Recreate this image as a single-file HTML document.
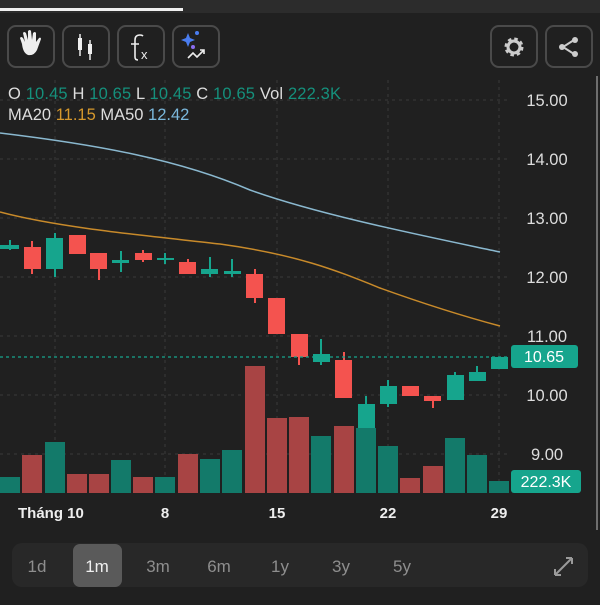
<!DOCTYPE html>
<html><head><meta charset="utf-8"><style>
body{margin:0;width:600px;height:600px;background:#202020;overflow:hidden;font-family:"Liberation Sans",sans-serif}
</style></head><body>
<svg width="600" height="600" xmlns="http://www.w3.org/2000/svg" font-family="Liberation Sans, sans-serif">
<rect width="600" height="600" fill="#202020"/>
<rect width="600" height="13" fill="#2c2c2c"/>
<rect x="0" y="8" width="183" height="3" fill="#f0f0f0"/>
<g fill="none" stroke="#4a4a4a" stroke-width="2">
<rect x="8" y="26" width="46" height="41" rx="8"/>
<rect x="63" y="26" width="46" height="41" rx="8"/>
<rect x="118" y="26" width="46" height="41" rx="8"/>
<rect x="173" y="26" width="46" height="41" rx="8"/>
<rect x="491" y="26" width="46" height="41" rx="8"/>
<rect x="546" y="26" width="46" height="41" rx="8"/>
</g>
<path d="M22 44 L20 38 Q21 36 23 38 L25 42 L23 33 Q24 31 26 33 L28 40 L28 31 Q30 29 31 31 L32 40 L33 33 Q35 31 36 33 L36 42 L39 38 Q41 37 41 39 L37 50 Q34 56 28 55 Q23 53 22 44Z" fill="#eee"/>
<g stroke="#eee" stroke-width="1.5"><line x1="80" y1="34" x2="80" y2="56"/><line x1="90" y1="40" x2="90" y2="60"/></g>
<rect x="78" y="38" width="4" height="12" fill="#eee"/><rect x="88" y="44" width="4" height="10" fill="#eee"/>
<path d="M138 60 Q135 60 135 57 M135 57 V40 Q135 35 140 35 Q142 35 143 36 M131 44 H139" fill="none" stroke="#eee" stroke-width="1.6"/>
<text x="141" y="59" fill="#eee" font-size="13">x</text>
<path d="M188 33 l2 5 5 2 -5 2 -2 5 -2 -5 -5 -2 5 -2z" fill="#4a7df0"/>
<circle cx="197" cy="33" r="2" fill="#4a7df0"/><circle cx="193" cy="47" r="2" fill="#8a6df0"/>
<path d="M188 58 l5 -5 4 4 7 -7 M200 50 h4 v4" fill="none" stroke="#eee" stroke-width="1.6"/>
<circle cx="514" cy="47" r="7" fill="none" stroke="#ccc" stroke-width="5" stroke-dasharray="3 2.5"/>
<circle cx="514" cy="47" r="6" fill="none" stroke="#ccc" stroke-width="3"/>
<path d="M574 40 L563 47 L574 54" fill="none" stroke="#ccc" stroke-width="2"/>
<circle cx="575" cy="40" r="3" fill="#ccc"/><circle cx="562" cy="47" r="3" fill="#ccc"/><circle cx="575" cy="54" r="3" fill="#ccc"/>
<g stroke="#3a3a3a" stroke-width="1" stroke-dasharray="3 4">
<line x1="0" y1="100" x2="510" y2="100"/><line x1="0" y1="159" x2="510" y2="159"/><line x1="0" y1="218" x2="510" y2="218"/><line x1="0" y1="277" x2="510" y2="277"/><line x1="0" y1="336" x2="510" y2="336"/><line x1="0" y1="395" x2="510" y2="395"/><line x1="0" y1="454" x2="510" y2="454"/>
<line x1="55" y1="80" x2="55" y2="493"/><line x1="165" y1="80" x2="165" y2="493"/><line x1="277" y1="80" x2="277" y2="493"/><line x1="388" y1="80" x2="388" y2="493"/><line x1="499" y1="80" x2="499" y2="493"/>
</g>
<line x1="597" y1="76" x2="597" y2="530" stroke="#bbb" stroke-width="1"/>
<path d="M0 133 C100 145 180 160 250 190 C320 215 420 235 500 252" fill="none" stroke="#8ab8cf" stroke-width="1.5"/>
<path d="M0 212 C60 228 150 236 220 244 C300 255 340 272 380 288 C430 306 470 318 500 326" fill="none" stroke="#c88a2a" stroke-width="1.5"/>
<g>
<rect x="0" y="477" width="20" height="16" fill="#137a6a"/>
<rect x="22" y="455" width="20" height="38" fill="#a84444"/>
<rect x="45" y="442" width="20" height="51" fill="#137a6a"/>
<rect x="67" y="474" width="20" height="19" fill="#a84444"/>
<rect x="89" y="474" width="20" height="19" fill="#a84444"/>
<rect x="111" y="460" width="20" height="33" fill="#137a6a"/>
<rect x="133" y="477" width="20" height="16" fill="#a84444"/>
<rect x="155" y="477" width="20" height="16" fill="#137a6a"/>
<rect x="178" y="454" width="20" height="39" fill="#a84444"/>
<rect x="200" y="459" width="20" height="34" fill="#137a6a"/>
<rect x="222" y="450" width="20" height="43" fill="#137a6a"/>
<rect x="245" y="366" width="20" height="127" fill="#a84444"/>
<rect x="267" y="418" width="20" height="75" fill="#a84444"/>
<rect x="289" y="417" width="20" height="76" fill="#a84444"/>
<rect x="311" y="436" width="20" height="57" fill="#137a6a"/>
<rect x="334" y="426" width="20" height="67" fill="#a84444"/>
<rect x="356" y="428" width="20" height="65" fill="#137a6a"/>
<rect x="378" y="446" width="20" height="47" fill="#137a6a"/>
<rect x="400" y="478" width="20" height="15" fill="#a84444"/>
<rect x="423" y="466" width="20" height="27" fill="#a84444"/>
<rect x="445" y="438" width="20" height="55" fill="#137a6a"/>
<rect x="467" y="455" width="20" height="38" fill="#137a6a"/>
<rect x="489" y="481" width="20" height="12" fill="#137a6a"/>
</g>
<g stroke-width="2">
<g stroke="#16a58d" fill="#16a58d"><line x1="10" y1="240" x2="10" y2="250"/><rect x="1" y="246" width="17" height="2"/></g>
<g stroke="#f4534f" fill="#f4534f"><line x1="32" y1="241" x2="32" y2="274"/><rect x="24" y="247" width="17" height="22" stroke="none"/></g>
<g stroke="#16a58d" fill="#16a58d"><line x1="55" y1="233" x2="55" y2="277"/><rect x="46" y="238" width="17" height="31" stroke="none"/></g>
<g stroke="#f4534f" fill="#f4534f"><rect x="69" y="235" width="17" height="19" stroke="none"/></g>
<g stroke="#f4534f" fill="#f4534f"><line x1="99" y1="253" x2="99" y2="280"/><rect x="90" y="253" width="17" height="16" stroke="none"/></g>
<g stroke="#16a58d" fill="#16a58d"><line x1="121" y1="251" x2="121" y2="272"/><rect x="112" y="260" width="17" height="3" stroke="none"/></g>
<g stroke="#f4534f" fill="#f4534f"><line x1="143" y1="250" x2="143" y2="262"/><rect x="135" y="253" width="17" height="7" stroke="none"/></g>
<g stroke="#16a58d" fill="#16a58d"><line x1="165" y1="253" x2="165" y2="264"/><rect x="157" y="258" width="17" height="2" stroke="none"/></g>
<g stroke="#f4534f" fill="#f4534f"><line x1="188" y1="259" x2="188" y2="274"/><rect x="179" y="262" width="17" height="12" stroke="none"/></g>
<g stroke="#16a58d" fill="#16a58d"><line x1="210" y1="257" x2="210" y2="277"/><rect x="201" y="269" width="17" height="5" stroke="none"/></g>
<g stroke="#16a58d" fill="#16a58d"><line x1="232" y1="259" x2="232" y2="277"/><rect x="224" y="271" width="17" height="3" stroke="none"/></g>
<g stroke="#f4534f" fill="#f4534f"><line x1="255" y1="269" x2="255" y2="303"/><rect x="246" y="274" width="17" height="24" stroke="none"/></g>
<g stroke="#f4534f" fill="#f4534f"><rect x="268" y="298" width="17" height="36" stroke="none"/></g>
<g stroke="#f4534f" fill="#f4534f"><line x1="299" y1="334" x2="299" y2="365"/><rect x="291" y="334" width="17" height="23" stroke="none"/></g>
<g stroke="#16a58d" fill="#16a58d"><line x1="321" y1="339" x2="321" y2="365"/><rect x="313" y="354" width="17" height="8" stroke="none"/></g>
<g stroke="#f4534f" fill="#f4534f"><line x1="344" y1="352" x2="344" y2="360"/><rect x="335" y="360" width="17" height="38" stroke="none"/></g>
<g stroke="#16a58d" fill="#16a58d"><line x1="366" y1="396" x2="366" y2="404"/><rect x="358" y="404" width="17" height="24" stroke="none"/></g>
<g stroke="#16a58d" fill="#16a58d"><line x1="388" y1="380" x2="388" y2="407"/><rect x="380" y="386" width="17" height="18" stroke="none"/></g>
<g stroke="#f4534f" fill="#f4534f"><rect x="402" y="386" width="17" height="10" stroke="none"/></g>
<g stroke="#f4534f" fill="#f4534f"><line x1="433" y1="396" x2="433" y2="408"/><rect x="424" y="396" width="17" height="5" stroke="none"/></g>
<g stroke="#16a58d" fill="#16a58d"><line x1="455" y1="372" x2="455" y2="400"/><rect x="447" y="375" width="17" height="25" stroke="none"/></g>
<g stroke="#16a58d" fill="#16a58d"><line x1="477" y1="366" x2="477" y2="381"/><rect x="469" y="372" width="17" height="9" stroke="none"/></g>
<g stroke="#16a58d" fill="#16a58d"><rect x="491" y="357" width="17" height="12" stroke="none"/></g>
</g>
<line x1="0" y1="357" x2="510" y2="357" stroke="#16a58d" stroke-width="1.3" stroke-dasharray="3 3"/>
<rect x="511" y="345" width="67" height="23" rx="3" fill="#16a58d"/>
<text x="544" y="362" fill="#fff" font-size="16" text-anchor="middle">10.65</text>
<rect x="511" y="470" width="70" height="23" rx="3" fill="#16a58d"/>
<text x="546" y="487" fill="#fff" font-size="16" text-anchor="middle">222.3K</text>
<g fill="#ddd" font-size="16.5" text-anchor="middle">
<text x="547" y="106">15.00</text><text x="547" y="165">14.00</text><text x="547" y="224">13.00</text><text x="547" y="283">12.00</text><text x="547" y="342">11.00</text><text x="547" y="401">10.00</text><text x="547" y="460">9.00</text>
</g>
<text x="8" y="99" font-size="16.5" fill="#ddd" textLength="333">O <tspan fill="#15907c">10.45</tspan> H <tspan fill="#15907c">10.65</tspan> L <tspan fill="#15907c">10.45</tspan> C <tspan fill="#15907c">10.65</tspan> Vol <tspan fill="#15907c">222.3K</tspan></text>
<text x="8" y="120" font-size="16.5" fill="#ddd">MA20 <tspan fill="#d6982c">11.15</tspan> MA50 <tspan fill="#7bb8dc">12.42</tspan></text>
<g fill="#eee" font-size="15" font-weight="bold" text-anchor="middle">
<text x="18" y="518" text-anchor="start">Tháng 10</text><text x="165" y="518">8</text><text x="277" y="518">15</text><text x="388" y="518">22</text><text x="499" y="518">29</text>
</g>
<rect x="12" y="543" width="576" height="44" rx="10" fill="#282828"/>
<rect x="73" y="544" width="49" height="43" rx="7" fill="#5a5a5a"/>
<g fill="#8e8e8e" font-size="17" text-anchor="middle">
<text x="37" y="572">1d</text><text x="97" y="572" fill="#f0f0f0">1m</text><text x="158" y="572">3m</text><text x="219" y="572">6m</text><text x="280" y="572">1y</text><text x="341" y="572">3y</text><text x="402" y="572">5y</text>
</g>
<path d="M555 575 L572 558 M555 575 h6 M555 575 v-6 M572 558 h-6 M572 558 v6" stroke="#9a9a9a" stroke-width="2" fill="none"/>
</svg>
</body></html>
